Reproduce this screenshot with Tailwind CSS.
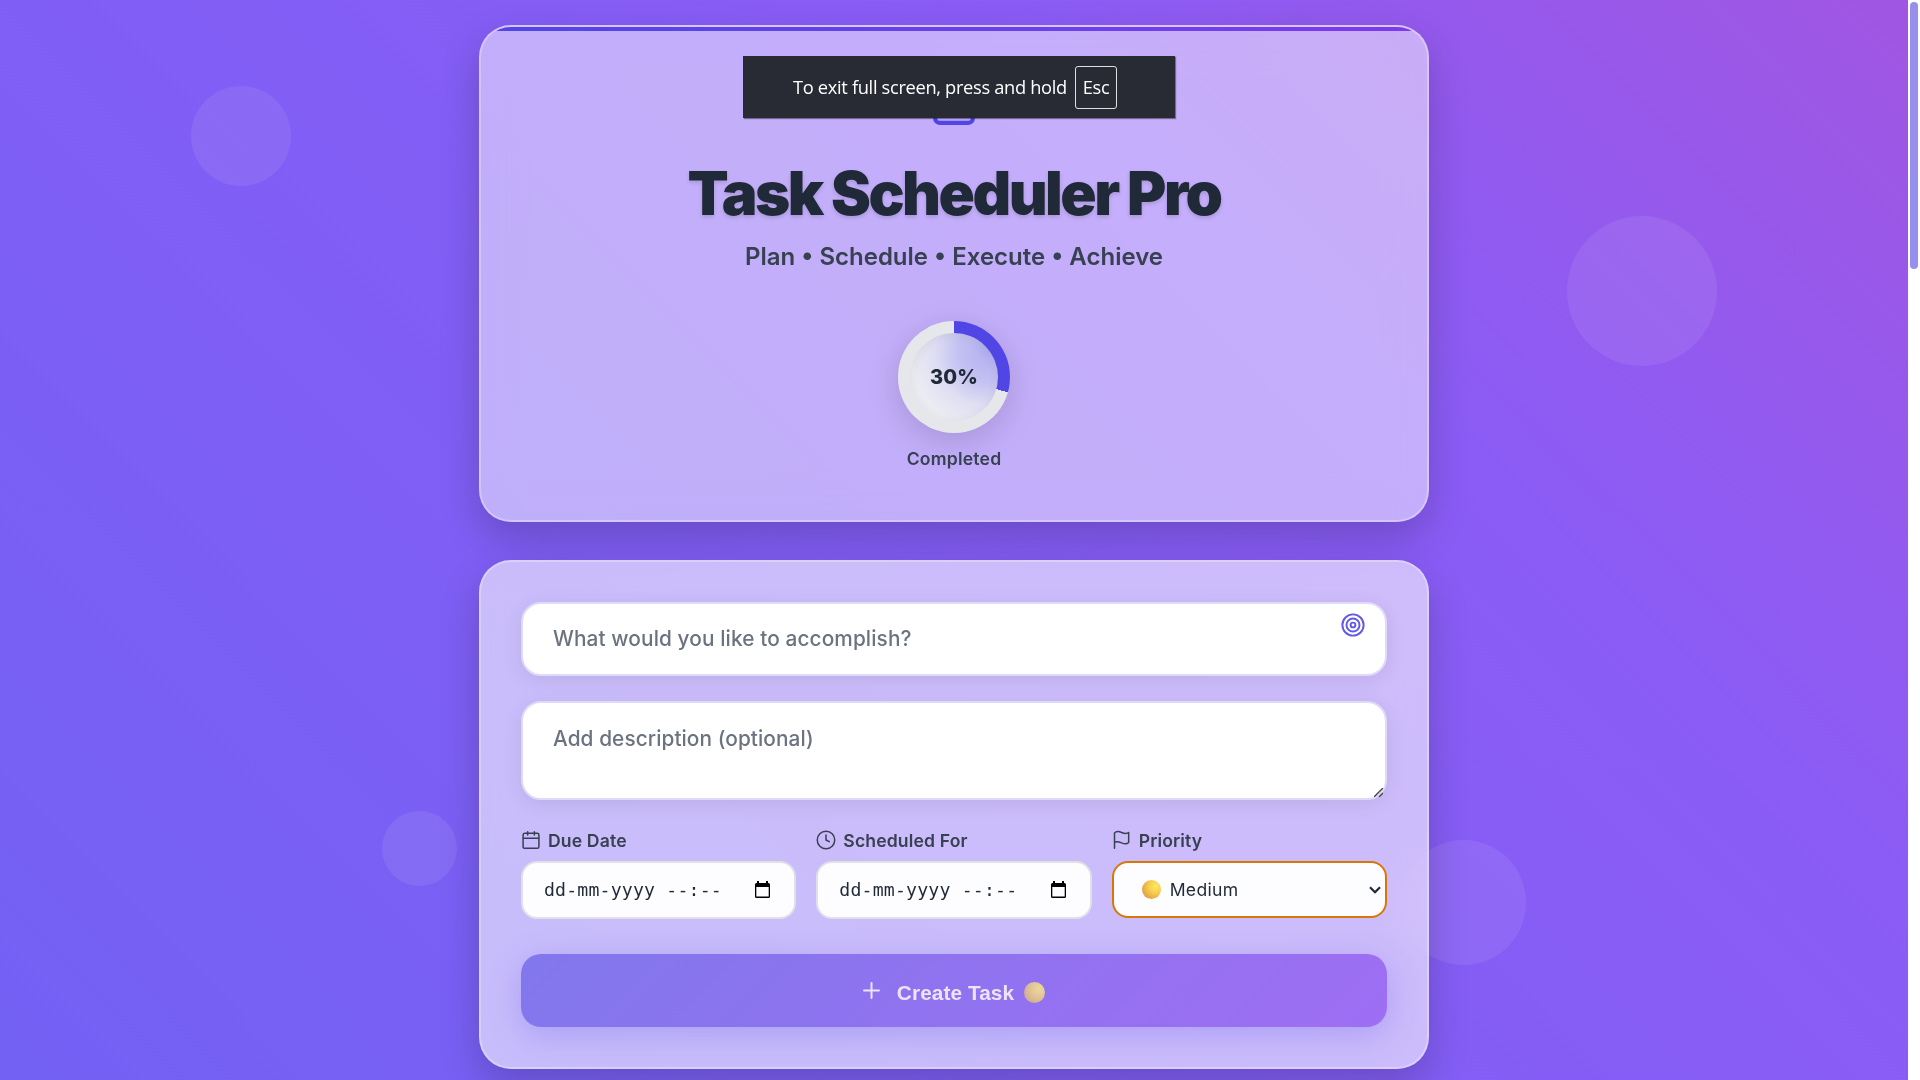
<!DOCTYPE html>
<html lang="en">
<head>
<meta charset="utf-8">
<title>Task Scheduler Pro</title>
<script src="https://cdn.jsdelivr.net/npm/@tailwindcss/browser@4"></script>
</head>
<body class="relative flex h-[1080px] w-[1920px] overflow-hidden bg-white font-['Inter',sans-serif] text-[#1f2937]">
<div class="relative h-[1080px] w-[1908px] overflow-hidden bg-[linear-gradient(45deg,#7361f4_0%,#8b5cf6_70%,#a056e2_100%)]">
  <!-- floating circles -->
  <div class="absolute left-[191px] top-[86px] size-[100px] rounded-full bg-white/8"></div>
  <div class="absolute left-[1567px] top-[216px] size-[150px] rounded-full bg-white/8"></div>
  <div class="absolute left-[382px] top-[811px] size-[75px] rounded-full bg-white/8"></div>
  <div class="absolute left-[1401px] top-[840px] size-[125px] rounded-full bg-white/8"></div>

  <main class="mx-auto flex w-[950px] flex-col gap-[38px] pt-[25px]">
    <header class="relative flex h-[497px] flex-col items-center overflow-hidden rounded-[32px] border-2 border-white/30 bg-white/50 pt-[50px] shadow-[0_16px_40px_rgba(0,0,0,0.2)] backdrop-blur-[20px]">
      <div class="absolute inset-x-0 top-0 h-1 bg-linear-to-r from-[#4f46e5] to-[#7c3aed]"></div>
      <svg class="size-[50px]" viewBox="0 0 24 24" fill="none" stroke="#4f46e5" stroke-width="2" stroke-linecap="round" stroke-linejoin="round"><rect x="3" y="4" width="18" height="18" rx="2"/><path d="M16 2v4M8 2v4M3 10h18"/></svg>
      <h1 class="mt-[30px] whitespace-nowrap text-[60px] leading-[72px] font-black tracking-[-0.042em] [text-shadow:0_2px_4px_rgba(0,0,0,0.15)]">Task Scheduler Pro</h1>
      <p class="mt-[9px] whitespace-nowrap text-[24px] leading-[38px] font-semibold text-[#374151]">Plan • Schedule • Execute • Achieve</p>
      <div class="mt-[45px] flex size-[112px] shrink-0 items-center justify-center rounded-full bg-[conic-gradient(#4f46e5_0deg_106deg,#e5e7eb_106deg_360deg)] shadow-[0_8px_32px_rgba(0,0,0,0.15)]">
        <div class="flex size-[88px] items-center justify-center rounded-full bg-[radial-gradient(circle_at_88%_22%,#b3b0f1_0%,#c3c1f2_28%,#e0dff3_52%,#ececf3_75%)] text-[20px] font-extrabold tracking-[0.1px] shadow-[inset_0_2px_12px_rgba(0,0,0,0.07)]">30%</div>
      </div>
      <div class="mt-[12px] text-[17.6px] leading-[28px] font-semibold tracking-[0.2px] text-[#374151]">Completed</div>
    </header>

    <section class="flex h-[509px] flex-col rounded-[32px] border-2 border-white/30 bg-white/59 px-10 pt-10 shadow-[0_16px_40px_rgba(0,0,0,0.2)] backdrop-blur-[20px]">
      <div class="relative flex h-[74px] items-center rounded-[20px] border-2 border-[#dedafa] bg-white px-[30px] text-[20.8px] font-medium tracking-[0.11px] text-[#6b7280] shadow-[0_4px_20px_rgba(0,0,0,0.08)]">
        <span class="whitespace-nowrap">What would you like to accomplish?</span>
        <svg class="absolute right-[19px] top-[8px] size-[26px]" viewBox="0 0 24 24" fill="none" stroke="#6259e8" stroke-width="1.8"><circle cx="12" cy="12" r="9.800"/><circle cx="12" cy="12" r="6"/><circle cx="12" cy="12" r="2.200"/></svg>
      </div>
      <div class="relative mt-[25px] h-[99px] rounded-[20px] border-2 border-[#dedafa] bg-white px-[30px] pt-[20px] text-[20.8px] leading-[32px] font-medium tracking-[0.08px] text-[#6b7280] shadow-[0_4px_20px_rgba(0,0,0,0.08)]">
        <span class="whitespace-nowrap">Add description (optional)</span>
        <svg class="absolute right-[2px] bottom-[1px] size-[9px]" viewBox="0 0 9 9" fill="none" stroke="#444" stroke-width="1.4"><path d="M0 9L9 0M5 9l4-4"/></svg>
      </div>

      <div class="mt-[27px] grid grid-cols-3 gap-5">
        <div>
          <div class="flex h-[27px] items-center gap-[7px] pt-px text-[17.6px] font-semibold tracking-[0.14px] text-[#374151]">
            <svg class="-mt-0.5 size-[20px]" viewBox="0 0 24 24" fill="none" stroke="currentColor" stroke-width="1.8" stroke-linecap="round" stroke-linejoin="round"><rect x="2.500" y="4" width="19" height="18" rx="2"/><path d="M16 2v4M8 2v4M3 10h18"/></svg>Due Date</div>
          <div class="mt-[7px] flex h-[58px] items-center justify-between rounded-2xl border-2 border-[#e0e0e6] bg-[#fdfcff] pr-[24px] pl-[21px] font-['DejaVu_Sans_Mono',monospace] text-[18.2px] tracking-[0.17px]"><span class="whitespace-pre">dd-mm-yyyy --:--</span>
            <svg class="-mt-px h-[17px] w-[15px]" viewBox="0 0 15 17"><path d="M2 0h2v2h7V0h2v2h.5A1.5 1.5 0 0 1 15 3.500V15.500A1.500 1.500 0 0 1 13.500 17h-12A1.500 1.500 0 0 1 0 15.500V3.500A1.500 1.500 0 0 1 1.500 2H2zM1.300 6v9.600h12.400V6z" fill="#000"/></svg></div>
        </div>
        <div>
          <div class="flex h-[27px] items-center gap-[7px] pt-px text-[17.6px] font-semibold tracking-[0.14px] text-[#374151]">
            <svg class="-mt-0.5 size-[20px]" viewBox="0 0 24 24" fill="none" stroke="currentColor" stroke-width="1.8" stroke-linecap="round" stroke-linejoin="round"><circle cx="12" cy="12" r="10.500"/><path d="M12 6v6l4 2"/></svg>Scheduled For</div>
          <div class="mt-[7px] flex h-[58px] items-center justify-between rounded-2xl border-2 border-[#e0e0e6] bg-[#fdfcff] pr-[24px] pl-[21px] font-['DejaVu_Sans_Mono',monospace] text-[18.2px] tracking-[0.17px]"><span class="whitespace-pre">dd-mm-yyyy --:--</span>
            <svg class="-mt-px h-[17px] w-[15px]" viewBox="0 0 15 17"><path d="M2 0h2v2h7V0h2v2h.5A1.5 1.5 0 0 1 15 3.500V15.500A1.500 1.500 0 0 1 13.500 17h-12A1.500 1.500 0 0 1 0 15.500V3.500A1.500 1.500 0 0 1 1.500 2H2zM1.300 6v9.600h12.400V6z" fill="#000"/></svg></div>
        </div>
        <div>
          <div class="flex h-[27px] items-center gap-[7px] pt-px text-[17.6px] font-semibold tracking-[0.14px] text-[#374151]">
            <svg class="-mt-0.5 size-[20px]" viewBox="0 0 24 24" fill="none" stroke="currentColor" stroke-width="1.8" stroke-linecap="round" stroke-linejoin="round"><path d="M3 22V3.500C5 1.500 8 1.500 11.500 3S18 4.500 20 3v12c-2 2-5 2-8.500.500S5 13.500 3 15"/></svg>Priority</div>
          <div class="mt-[7px] flex h-[57px] items-center rounded-2xl border-2 border-[#d97706] bg-[#fdfcff] pr-[4px] pl-[28px] text-[17.6px] tracking-[0.3px]">
            <span class="size-[19px] rounded-full bg-[radial-gradient(circle_at_72%_32%,#ffe860_0%,#f7cf50_35%,#dfa544_75%,#e08f5c_100%)]"></span><span class="mt-px ml-[9px]">Medium</span>
            <svg class="ml-auto h-[8px] w-[12px]" viewBox="0 0 12 8" fill="none" stroke="#1f2937" stroke-width="2.200"><path d="M1 1.200l5 5 5-5"/></svg></div>
        </div>
      </div>

      <div class="mt-[35px] flex h-[73px] items-center justify-center rounded-[20px] bg-[linear-gradient(135deg,#8277ec_0%,#9e6ef3_100%)] font-['Liberation_Sans',sans-serif] text-[20.8px] font-bold text-[#ebe4fc] shadow-[0_8px_32px_rgba(79,70,229,0.25)]">
        <svg class="mt-[-1px] mr-[17px] size-[17px]" viewBox="0 0 17 17" fill="none" stroke="#ebe4fc" stroke-width="2" stroke-linecap="round"><path d="M8.500 1v15M1 8.500h15"/></svg>
        <span class="mt-[5px] whitespace-nowrap tracking-[0.08px]">Create Task</span>
        <span class="mt-[3px] ml-[10px] size-[21px] rounded-full bg-[radial-gradient(circle_at_72%_32%,#ecd89c_0%,#e3c898_35%,#d3ae90_75%,#cfa39c_100%)]"></span>
      </div>
    </section>
  </main>

  <!-- full-screen notice -->
  <div class="absolute left-[743px] top-[56px] flex h-[62px] w-[432px] items-center bg-[#292b34] pl-[50px] font-['Open_Sans',sans-serif] text-[18.3px] tracking-[-0.33px] text-white shadow-[1px_1px_1px_rgba(0,0,0,0.4)]">
    <span class="w-[282px] whitespace-nowrap">To exit full screen, press and hold</span>
    <span class="flex h-[43px] w-[42px] items-center justify-center rounded-[3px] border border-white/85">Esc</span>
  </div>
</div>
<!-- scrollbar -->
<div class="flex h-[1080px] w-3 justify-center bg-white pt-[2px]"><div class="h-[267px] w-2 rounded-full bg-[#968fee]"></div></div>
</body>
</html>
